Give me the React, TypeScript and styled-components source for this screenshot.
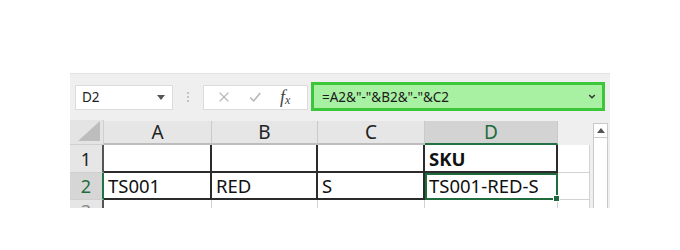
import React from 'react';
import styled, { createGlobalStyle } from 'styled-components';

const GlobalStyle = createGlobalStyle`
  html, body {
    margin: 0;
    padding: 0;
    background: #ffffff;
  }
  * {
    box-sizing: border-box;
  }
`;

const columns = ['A', 'B', 'C', 'D'];

const rows = [
  { id: 1, cells: ['', '', '', 'SKU'] },
  { id: 2, cells: ['TS001', 'RED', 'S', 'TS001-RED-S'] },
  { id: 3, cells: ['', '', '', ''] },
];

const App = () => {
  return (
    <Page>
      <GlobalStyle />
      <Window>
        <FormulaBar>
          <NameBox>
            <span>D2</span>
            <Caret />
          </NameBox>
          <Dots>
            <i />
            <i />
            <i />
          </Dots>
          <ButtonBox>
            <ActionIcon viewBox="0 0 16 16">
              <path d="M3 3 L13 13 M13 3 L3 13" stroke="#b5b5b5" strokeWidth="1.6" fill="none" />
            </ActionIcon>
            <ActionIcon viewBox="0 0 16 16">
              <path d="M2.5 8.5 L6.5 12.5 L14 3.5" stroke="#b5b5b5" strokeWidth="1.8" fill="none" />
            </ActionIcon>
            <Fx>
              f<sub>x</sub>
            </Fx>
          </ButtonBox>
          <FormulaInput>
            <span>=A2&amp;"-"&amp;B2&amp;"-"&amp;C2</span>
            <Chevron viewBox="0 0 10 8">
              <path d="M1.5 2 L5 5.5 L8.5 2" stroke="#333" strokeWidth="1.8" fill="none" />
            </Chevron>
          </FormulaInput>
        </FormulaBar>

        <Sheet>
          <Grid>
            <Corner>
              <CornerTriangle />
            </Corner>
            {columns.map((c) => (
              <ColHeader key={c} $active={c === 'D'}>
                {c}
              </ColHeader>
            ))}
            <ColHeader $blank />

            {rows.map((row) => (
              <React.Fragment key={row.id}>
                <RowHeader $active={row.id === 2} $last={row.id === 3}>
                  {row.id}
                </RowHeader>
                {row.cells.map((text, i) => (
                  <Cell
                    key={i}
                    $bold={row.id === 1 && i === 3}
                    $faint={row.id === 3}
                    $selected={row.id === 2 && i === 3}
                  >
                    {text}
                    {row.id === 2 && i === 3 && <FillHandle />}
                  </Cell>
                ))}
                <Cell $faint />
              </React.Fragment>
            ))}
          </Grid>
          <ScrollBar>
            <ScrollUp>
              <svg width="8" height="5" viewBox="0 0 8 5">
                <path d="M0 5 L4 0 L8 5 Z" fill="#555" />
              </svg>
            </ScrollUp>
          </ScrollBar>
        </Sheet>
      </Window>
    </Page>
  );
};

export default App;

const Page = styled.div`
  width: 680px;
  height: 250px;
  padding: 73px 0 0 70px;
  font-family: 'Noto Sans', 'Open Sans', sans-serif;
`;

const Window = styled.div`
  width: 540px;
  height: 135px;
  background: #efefef;
  border-top: 1px solid #e2e2e2;
  overflow: hidden;
  display: flex;
  flex-direction: column;
`;

const FormulaBar = styled.div`
  height: 46px;
  flex-shrink: 0;
  display: flex;
  align-items: center;
  padding: 0 5px;
`;

const NameBox = styled.div`
  width: 98px;
  height: 25px;
  background: #fff;
  border: 1px solid #dcdcdc;
  display: flex;
  align-items: center;
  justify-content: space-between;
  padding: 0 7px 0 6px;
  font-size: 13.5px;
  color: #222;
`;

const Caret = styled.span`
  width: 0;
  height: 0;
  border-left: 4px solid transparent;
  border-right: 4px solid transparent;
  border-top: 5px solid #555;
`;

const Dots = styled.div`
  width: 30px;
  display: flex;
  flex-direction: column;
  align-items: center;
  gap: 2px;

  & > i {
    width: 2px;
    height: 2px;
    border-radius: 50%;
    background: #b4b4b4;
  }
`;

const ButtonBox = styled.div`
  width: 105px;
  height: 25px;
  background: #fff;
  border: 1px solid #dcdcdc;
  display: flex;
  align-items: center;
  padding-left: 13px;
  gap: 17px;
`;

const ActionIcon = styled.svg`
  width: 14px;
  height: 14px;
`;

const Fx = styled.span`
  font-family: 'Liberation Serif', serif;
  font-style: italic;
  font-size: 18px;
  line-height: 1;
  color: #444;
  margin-left: 1px;

  & > sub {
    font-size: 12px;
    vertical-align: -1px;
  }
`;

const FormulaInput = styled.div`
  margin-left: 3px;
  flex: 1;
  height: 29px;
  margin-top: -1px;
  background: #a8f0a2;
  border: 3px solid #3cc73a;
  display: flex;
  align-items: center;
  justify-content: space-between;
  padding: 0 6px 0 8px;
  font-size: 13.5px;
  color: #1a1a1a;
`;

const Chevron = styled.svg`
  width: 8px;
  height: 7px;
`;

const Sheet = styled.div`
  flex: 1;
  display: flex;
  align-items: flex-start;
`;

const Grid = styled.div`
  display: grid;
  grid-template-columns: 34px 108px 106px 107px 133px 32px;
  grid-template-rows: 25px 28px 27px 20px;
`;

const Corner = styled.div`
  background: #e4e4e4;
  border-right: 1px solid #cfcfcf;
  border-bottom: 1px solid #cfcfcf;
  display: flex;
  align-items: flex-end;
  justify-content: flex-end;
  padding: 0 3px 3px 0;
`;

const CornerTriangle = styled.div`
  width: 0;
  height: 0;
  border-left: 22px solid transparent;
  border-bottom: 20px solid #bdbdbd;
`;

const ColHeader = styled.div<{ $active?: boolean; $blank?: boolean }>`
  background: ${(p) => (p.$active ? '#d3d3d3' : p.$blank ? '#efefef' : '#e6e6e6')};
  border-right: ${(p) => (p.$blank ? 'none' : '1px solid #cacaca')};
  border-bottom: 2px solid ${(p) => (p.$active ? '#217346' : p.$blank ? 'transparent' : '#bdbdbd')};
  margin-top: ${(p) => (p.$blank ? '0' : '1px')};
  display: flex;
  align-items: center;
  justify-content: center;
  font-size: 19px;
  line-height: 1;
  padding-top: 1px;
  color: ${(p) => (p.$active ? '#1f6b3d' : '#222')};
`;

const RowHeader = styled.div<{ $active?: boolean; $last?: boolean }>`
  background: ${(p) => (p.$active ? '#d6d6d6' : '#e6e6e6')};
  border-right: 2px solid ${(p) => (p.$active ? '#217346' : '#555')};
  border-bottom: 1px solid #cfcfcf;
  display: flex;
  align-items: ${(p) => (p.$last ? 'flex-start' : 'center')};
  justify-content: center;
  font-size: 18px;
  line-height: ${(p) => (p.$last ? '23px' : 'normal')};
  color: ${(p) => (p.$active ? '#1f6b3d' : p.$last ? '#888' : '#222')};
`;

const Cell = styled.div<{ $bold?: boolean; $faint?: boolean; $selected?: boolean }>`
  position: relative;
  z-index: ${(p) => (p.$selected ? 2 : 'auto')};
  background: #fff;
  border-right: ${(p) => (p.$faint ? '1px solid #d2d2d2' : '2px solid #2b2b2b')};
  border-bottom: ${(p) => (p.$faint ? '1px solid #d2d2d2' : '2px solid #2b2b2b')};
  outline: ${(p) => (p.$selected ? '2px solid #1f6b3d' : 'none')};
  outline-offset: -2px;
  display: flex;
  align-items: center;
  padding-left: 4px;
  font-size: 18.5px;
  font-weight: ${(p) => (p.$bold ? 700 : 400)};
  color: #111;
  white-space: nowrap;
`;

const FillHandle = styled.span`
  position: absolute;
  right: -4px;
  bottom: -4px;
  width: 7px;
  height: 7px;
  background: #1f6b3d;
  border: 1px solid #fff;
`;

const ScrollBar = styled.div`
  margin: 3px 0 0 3px;
  width: 15px;
  height: 120px;
  background: #fff;
  border: 1px solid #c9c9c9;
`;

const ScrollUp = styled.div`
  height: 14px;
  border-bottom: 1px solid #c9c9c9;
  display: flex;
  align-items: center;
  justify-content: center;
`;
